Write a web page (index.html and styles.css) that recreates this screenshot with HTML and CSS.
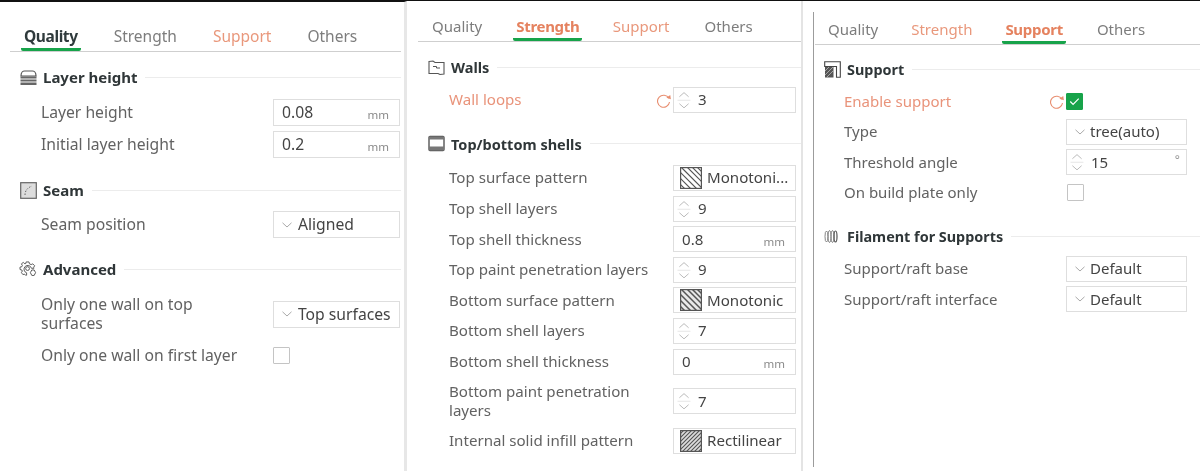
FILE: index.html
```html
<!DOCTYPE html>
<html lang="en">
<head>
<meta charset="utf-8">
<title>Process settings</title>
<link rel="stylesheet" href="styles.css">
</head>
<body>
<svg class="defs" width="0" height="0" aria-hidden="true">
  <symbol id="chev" viewBox="0 0 10 6"><path d="M.5.8 5 5l4.500-4.200" fill="none" stroke="#a9a9a9" stroke-width="1"/></symbol>
  <symbol id="spin" viewBox="0 0 16 26">
    <path d="M3 9.500 8 5l5 4.500M3 17l5 4.500 5-4.500" fill="none" stroke="#b5b5b5" stroke-width="1"/>
    <path d="M1 13.300h14" stroke="#e4e4e4" stroke-width="1"/>
  </symbol>
  <symbol id="reset" viewBox="0 0 16 16">
    <path d="M12.800 6.300A6 6 0 1 0 13.500 10" fill="none" stroke="#e88e70" stroke-width="1.100"/>
    <path d="m10.600 6.200 4.700.6-1.500-4z" fill="#e88e70" transform="rotate(12 13 5)"/>
  </symbol>
  <symbol id="mono" viewBox="0 0 22 22">
    <rect x=".6" y=".6" width="20.800" height="20.800" fill="#fff" stroke="#555" stroke-width="1.200"/>
    <path d="M6-1 23 16M1 0l21 21M-1 4l19 19M-1 10l13 13M-1 16l7 7M11-1l12 12M16-1l7 7" stroke="#555" stroke-width="1.200" fill="none"/>
  </symbol>
  <symbol id="mono-dark" viewBox="0 0 22 22">
    <rect x=".6" y=".6" width="20.800" height="20.800" fill="#e8e8e8" stroke="#555" stroke-width="1.200"/>
    <path d="M6-1 23 16M1 0l21 21M-1 4l19 19M-1 10l13 13M-1 16l7 7M11-1l12 12M16-1l7 7" stroke="#555" stroke-width="1.500" fill="none"/>
  </symbol>
  <symbol id="rect" viewBox="0 0 22 22">
    <rect x=".6" y=".6" width="20.800" height="20.800" fill="#ddd" stroke="#555" stroke-width="1.200"/>
    <path d="M-1 5 5-1M-1 9 9-1M-1 13 13-1M-1 17 17-1M-1 21 21-1M1 23 23 1M5 23 23 5M9 23 23 9M13 23 23 13M17 23l6-6" stroke="#555" stroke-width="1.100" fill="none"/>
  </symbol>
</svg>

<main class="page">

  <section class="panel panel-quality">
    <nav class="tabs">
      <a class="tab tab-on">Quality</a>
      <a class="tab">Strength</a>
      <a class="tab tab-changed">Support</a>
      <a class="tab">Others</a>
    </nav>

    <div class="group">
      <h2 class="head">
        <svg class="ico" viewBox="0 0 17 17"><path d="M1 7c0-3.500 2-5 3.500-5h8C14 2 16 3.500 16 7z" fill="none" stroke="#555" stroke-width="1.200"/><path d="M.5 7.500h16v2h-16zM.5 10.500h16v2h-16zM.5 13.500h16v2.500H.5z" fill="#666"/></svg>
        <span>Layer height</span><i class="rule"></i>
      </h2>
      <div class="row"><span class="label">Layer height</span><div class="box"><span class="val">0.08</span><span class="unit">mm</span></div></div>
      <div class="row"><span class="label">Initial layer height</span><div class="box"><span class="val">0.2</span><span class="unit">mm</span></div></div>
    </div>

    <div class="group">
      <h2 class="head">
        <svg class="ico" viewBox="0 0 17 17"><rect x=".7" y=".7" width="15.600" height="15.600" fill="#ddd" stroke="#666" stroke-width="1.200"/><path d="M5 13c0-4 2-7 7-9" fill="none" stroke="#666" stroke-width="1" stroke-dasharray="1.500 1.500"/></svg>
        <span>Seam</span><i class="rule"></i>
      </h2>
      <div class="row"><span class="label">Seam position</span><div class="box box-select"><svg class="chev"><use href="#chev"/></svg><span>Aligned</span></div></div>
    </div>

    <div class="group">
      <h2 class="head">
        <svg class="ico ico-gear" viewBox="0 0 19 18"><path d="M7 1h3l.5 2 1.800.8L14 3l2 2-1 1.700.3 1H12.600A4 4 0 1 0 7.500 12.500V15l-1 .2L5.500 14l-2 .3-1.500-2 1-1.700-.5-1L.5 9V6.500l2-.5.5-1.200L2 3l2-1.500L5.700 3l1-.4z" fill="none" stroke="#555" stroke-width="1"/><circle cx="8.500" cy="8" r="2" fill="none" stroke="#555"/><path d="M13 9.500h2.500l1.500 2.800-1.500 3H13l-1.500-3z" fill="none" stroke="#555"/></svg>
        <span>Advanced</span><i class="rule"></i>
      </h2>
      <div class="row row-tall"><span class="label">Only one wall on top<br>surfaces</span><div class="box box-select"><svg class="chev"><use href="#chev"/></svg><span>Top surfaces</span></div></div>
      <div class="row"><span class="label">Only one wall on first layer</span><div class="ctl-check"><span class="check"></span></div></div>
    </div>
  </section>

  <section class="panel panel-strength">
    <nav class="tabs">
      <a class="tab">Quality</a>
      <a class="tab tab-on tab-changed">Strength</a>
      <a class="tab tab-changed">Support</a>
      <a class="tab">Others</a>
    </nav>

    <div class="group">
      <h2 class="head">
        <svg class="ico" viewBox="0 0 17 17"><path d="M1 2.500 5 2l2 1.500h9v11.500l-4 .5-2-1H1z" fill="none" stroke="#555" stroke-width="1.100"/><path d="M5 7.500h3.500v1.500H12" fill="none" stroke="#555" stroke-width="1"/></svg>
        <span>Walls</span><i class="rule"></i>
      </h2>
      <div class="row row-changed"><span class="label">Wall loops</span><svg class="reset"><use href="#reset"/></svg><div class="box box-spin"><svg class="spin"><use href="#spin"/></svg><span>3</span></div></div>
    </div>

    <div class="group">
      <h2 class="head">
        <svg class="ico" viewBox="0 0 17 17"><rect x="1" y="1.500" width="15" height="14" rx="1" fill="#fff" stroke="#555" stroke-width="1.400"/><path d="M1 1.500h15v3H1zM1 11.500h15v4H1z" fill="#777"/></svg>
        <span>Top/bottom shells</span><i class="rule"></i>
      </h2>
      <div class="row"><span class="label">Top surface pattern</span><div class="box box-pattern"><svg class="pat"><use href="#mono"/></svg><span>Monotoni...</span></div></div>
      <div class="row"><span class="label">Top shell layers</span><div class="box box-spin"><svg class="spin"><use href="#spin"/></svg><span>9</span></div></div>
      <div class="row"><span class="label">Top shell thickness</span><div class="box"><span class="val">0.8</span><span class="unit">mm</span></div></div>
      <div class="row"><span class="label">Top paint penetration layers</span><div class="box box-spin"><svg class="spin"><use href="#spin"/></svg><span>9</span></div></div>
      <div class="row"><span class="label">Bottom surface pattern</span><div class="box box-pattern"><svg class="pat"><use href="#mono-dark"/></svg><span>Monotonic</span></div></div>
      <div class="row"><span class="label">Bottom shell layers</span><div class="box box-spin"><svg class="spin"><use href="#spin"/></svg><span>7</span></div></div>
      <div class="row"><span class="label">Bottom shell thickness</span><div class="box"><span class="val">0</span><span class="unit">mm</span></div></div>
      <div class="row row-tall"><span class="label">Bottom paint penetration<br>layers</span><div class="box box-spin"><svg class="spin"><use href="#spin"/></svg><span>7</span></div></div>
      <div class="row"><span class="label">Internal solid infill pattern</span><div class="box box-pattern"><svg class="pat"><use href="#rect"/></svg><span>Rectilinear</span></div></div>
    </div>
  </section>

  <section class="panel panel-support">
    <nav class="tabs">
      <a class="tab">Quality</a>
      <a class="tab tab-changed">Strength</a>
      <a class="tab tab-on tab-changed">Support</a>
      <a class="tab">Others</a>
    </nav>

    <div class="group">
      <h2 class="head">
        <svg class="ico" viewBox="0 0 17 17"><path d="M.7.7h15.600v15.600h-3.800V5.500H.7z" fill="none" stroke="#444" stroke-width="1.100"/><path d="M1 6h8.500v10.500H1z" fill="#555"/><path d="M1 10l4-4M1 14l8-8M3 16l6.500-6.500" stroke="#bbb" stroke-width=".8"/></svg>
        <span>Support</span><i class="rule"></i>
      </h2>
      <div class="row row-changed"><span class="label">Enable support</span><svg class="reset"><use href="#reset"/></svg><div class="ctl-check"><span class="check check-on"><svg viewBox="0 0 16 16"><path d="m3.500 8 3 3 6-6" fill="none" stroke="#fff" stroke-width="1.300"/></svg></span></div></div>
      <div class="row"><span class="label">Type</span><div class="box box-select"><svg class="chev"><use href="#chev"/></svg><span>tree(auto)</span></div></div>
      <div class="row"><span class="label">Threshold angle</span><div class="box box-spin"><svg class="spin"><use href="#spin"/></svg><span>15</span><span class="deg">°</span></div></div>
      <div class="row"><span class="label">On build plate only</span><div class="ctl-check"><span class="check"></span></div></div>
    </div>

    <div class="group">
      <h2 class="head">
        <svg class="ico" viewBox="0 0 17 17"><g fill="none" stroke="#777" stroke-width=".9"><ellipse cx="2.500" cy="8.500" rx="1.500" ry="5.500"/><ellipse cx="5.500" cy="8.500" rx="1.500" ry="6"/><ellipse cx="8.500" cy="8.500" rx="1.500" ry="6"/></g><ellipse cx="11.500" cy="8.500" rx="1.500" ry="5.500" fill="none" stroke="#555" stroke-width="1.200"/></svg>
        <span>Filament for Supports</span><i class="rule"></i>
      </h2>
      <div class="row"><span class="label">Support/raft base</span><div class="box box-select"><svg class="chev"><use href="#chev"/></svg><span>Default</span></div></div>
      <div class="row"><span class="label">Support/raft interface</span><div class="box box-select"><svg class="chev"><use href="#chev"/></svg><span>Default</span></div></div>
    </div>
  </section>

</main>
</body>
</html>
```

FILE: styles.css
```css
* { box-sizing: border-box; }

html, body {
  margin: 0;
  height: 100%;
  background: #fff;
  overflow: hidden;
}

.defs { position: absolute; }

.page {
  display: flex;
  height: 471px;
  border-top: 1px solid #111;
  font-family: "Noto Sans", "Open Sans", sans-serif;
  color: #4d4d4d;
  filter: blur(.3px);
}

.panel {
  --fs: 15.100px;
  --tab-fs: 15px;
  --title: 14.500px;
  --row: 26px;
  --gap: 4.600px;
  --box-w: 123px;
  --head-gap: 9px;
  display: flex;
  flex-direction: column;
  flex: none;
}

.panel-quality {
  --fs: 15.700px;
  --tab-fs: 15.500px;
  --title: 15px;
  --row: 27px;
  --gap: 5px;
  --box-w: 127px;
  width: 407px;
  padding: 22px 3px 0 10px;
  border-top: 1px solid #111;
  border-right: 3px solid #e7e7e7;
}

.panel-strength {
  width: 396px;
  padding: 14px 0 0 11px;
  border-right: 2px solid #e4e4e4;
}

.panel-support {
  --fs: 15px;
  --title: 14.400px;
  --box-w: 121px;
  --gap: 4.400px;
  --head-gap: 7.500px;
  width: 387px;
  height: 455px;
  margin: 11px 0 0 10px;
  padding: 6px 0 0 1px;
  border-left: 1px solid #9c9c9c;
}
.panel-support .group + .group { --head-gap: 7px; }

/* tabs */
.tabs {
  display: flex;
  gap: 30px;
  border-bottom: 1px solid #cfcfcf;
  padding-left: 11px;
}
.panel-strength .tabs { padding-left: 11px; gap: 26px; }
.panel-support .tabs { padding-left: 10px; gap: 25px; }

.panel-strength .tab:nth-child(2) { margin-left: 2px; }
.panel-strength .tab:nth-child(3) { margin-left: 1.400px; }
.panel-strength .tab:nth-child(4) { margin-left: 3px; }
.panel-support .tab:nth-child(2) { margin-left: 2px; }
.panel-support .tab:nth-child(3) { margin-left: 2px; }
.panel-support .tab:nth-child(4) { margin-left: 3px; }

.tab {
  padding: 0 3px;
  line-height: 24px;
  font-size: var(--tab-fs);
  color: #7d7d7d;
  border-bottom: 3px solid transparent;
  border-radius: 2px;
}
.panel-strength .tab, .panel-support .tab { line-height: 23px; }
.tab-changed { color: #e9987c; }
.tab-on { font-weight: 700; color: #2f3a3c; border-bottom-color: #17a34a; letter-spacing: -.3px; }
.panel-quality .tab-on { letter-spacing: -.4px; }
.tab-on.tab-changed { color: #e5825f; }

/* groups */
.group { display: flex; flex-direction: column; gap: var(--gap); margin-top: 20px; }
.panel-strength .group, .panel-support .group { margin-top: 19px; }
.panel .tabs + .group { margin-top: 13px; --head-gap: 10px; }
.panel-strength .tabs + .group { margin-top: 13px; --head-gap: 8px; }
.panel-support .tabs + .group { margin-top: 12px; --head-gap: 7.500px; }
.panel-quality .group:last-child .head { margin-top: -1px; margin-bottom: 5px; }

.head {
  display: flex;
  align-items: center;
  gap: 6px;
  height: 24px;
  margin: 0 0 calc(var(--head-gap) - var(--gap)) 0;
  padding-left: 10px;
  font-size: var(--title);
  font-weight: 700;
  color: #2f3638;
  white-space: nowrap;
}
.panel-support .head { padding-left: 9px; }
.ico { width: 17px; height: 17px; flex: none; }
.ico-gear { width: 19px; margin-left: -1px; margin-right: -1px; }
.rule { flex: 1; height: 1px; background: #ececec; margin-left: 2px; }

/* rows */
.row {
  display: flex;
  align-items: center;
  min-height: var(--row);
  padding: 0 1px 0 31px;
  font-size: var(--fs);
  line-height: 19px;
}
.panel-strength .row { padding-right: 5px; }
.panel-support .row { padding: 0 13px 0 29px; }
.row-tall { padding-top: 3px; padding-bottom: 3px; }
.panel-quality .row-tall { padding-top: 4px; padding-bottom: 4px; }
.row-changed .label { color: #e9937a; }

.label { flex: 1; color: #626262; white-space: nowrap; }

.box {
  display: flex;
  align-items: center;
  flex: none;
  position: relative;
  width: var(--box-w);
  height: var(--row);
  padding-left: 8px;
  border: 1px solid #dedede;
  color: #444;
  white-space: nowrap;
}
.val { flex: 1; }
.unit { font-size: 11.500px; color: #8a8a8a; margin: 4px 10px 0 0; }
.deg { position: absolute; right: 6px; top: 0; font-size: 12px; color: #999; }

.box-select { gap: 6px; }
.panel-support .box-select { gap: 5px; }
.chev { width: 10px; height: 6px; flex: none; }
.box-spin { padding-left: 2px; gap: 6px; }
.spin { width: 16px; height: 24px; flex: none; }
.box-pattern { padding-left: 6px; gap: 5px; }
.pat { width: 22px; height: 22px; flex: none; }

.reset { width: 16px; height: 16px; flex: none; margin-right: 1px; }

.ctl-check { width: var(--box-w); flex: none; display: flex; align-items: center; }
.check {
  display: block;
  width: 17px;
  height: 17px;
  margin-left: 1px;
  border: 1px solid #c4c4c4;
  border-radius: 1px;
}
.panel-quality .check { margin-left: 0; }
.check-on { background: #17a34a; border-color: #17a34a; margin-left: 0; }
.check svg { display: block; width: 100%; height: 100%; }
```
